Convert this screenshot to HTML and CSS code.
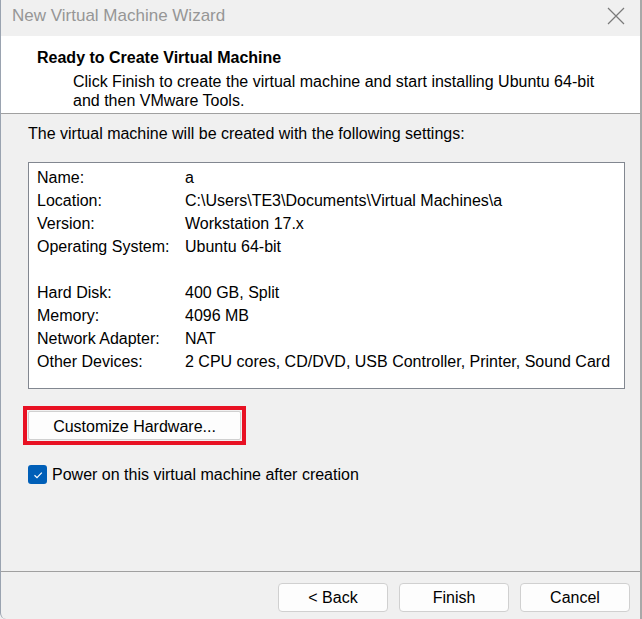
FILE: index.html
```html
<!DOCTYPE html>
<html lang="en">
<head>
  <title>New Virtual Machine Wizard</title>
  <meta charset="utf-8">
  <link rel="stylesheet" href="styles.css">
</head>
<body>
  <div class="window">
    <div class="titlebar">
      <span class="titlebar-text">New Virtual Machine Wizard</span>
      <svg class="close" width="18" height="18" viewBox="0 0 18 18">
        <path d="M1 1 L17 17 M17 1 L1 17" stroke="#7a7a7a" stroke-width="1.2" fill="none"/>
      </svg>
    </div>

    <div class="header">
      <h1 class="header-title">Ready to Create Virtual Machine</h1>
      <p class="header-text">Click Finish to create the virtual machine and start installing Ubuntu 64-bit and then VMware Tools.</p>
    </div>

    <div class="content">
      <p class="intro">The virtual machine will be created with the following settings:</p>
      <div class="summary">
        <div class="summary-row"><span>Name:</span><span>a</span></div>
        <div class="summary-row"><span>Location:</span><span>C:\Users\TE3\Documents\Virtual Machines\a</span></div>
        <div class="summary-row"><span>Version:</span><span>Workstation 17.x</span></div>
        <div class="summary-row"><span>Operating System:</span><span>Ubuntu 64-bit</span></div>
        <div class="summary-row"><span></span><span></span></div>
        <div class="summary-row"><span>Hard Disk:</span><span>400 GB, Split</span></div>
        <div class="summary-row"><span>Memory:</span><span>4096 MB</span></div>
        <div class="summary-row"><span>Network Adapter:</span><span>NAT</span></div>
        <div class="summary-row"><span>Other Devices:</span><span>2 CPU cores, CD/DVD, USB Controller, Printer, Sound Card</span></div>
      </div>

      <div class="highlight">
        <button type="button" class="btn btn-wide">Customize Hardware...</button>
      </div>

      <label class="check-row">
        <span class="checkbox">
          <svg width="12" height="12" viewBox="0 0 12 12">
            <path d="M2.5 6.3 L5 8.7 L9.8 3.6" stroke="#ffffff" stroke-width="1.2" fill="none"/>
          </svg>
        </span>
        Power on this virtual machine after creation
      </label>
    </div>

    <div class="footer">
      <button type="button" class="btn">&lt; Back</button>
      <button type="button" class="btn">Finish</button>
      <button type="button" class="btn">Cancel</button>
    </div>
  </div>
</body>
</html>
```

FILE: styles.css
```css
body {
  background-color: #f0f0f0;
  color: #000000;
  font-family: "Liberation Sans", Arial, sans-serif;
  font-size: 16px;
  margin: 0;
}

.window {
  border-left: 1px solid #9aa3b0;
  border-right: 2px solid #a8a8a8;
  border-bottom-left-radius: 6px;
  box-sizing: border-box;
  display: flex;
  flex-direction: column;
  height: 619px;
  width: 642px;
}

.titlebar {
  align-items: center;
  background-color: #f0f0f0;
  box-sizing: border-box;
  display: flex;
  height: 36px;
  justify-content: space-between;
  padding: 0 15px 5px 11px;
}

.titlebar-text {
  color: #969696;
  font-size: 17px;
}

.header {
  background-color: #ffffff;
  border-bottom: 1px solid #a0a0a0;
  box-sizing: border-box;
  height: 78px;
  padding: 12px 0 0 36px;
}

.header-title {
  font-size: 16px;
  font-weight: bold;
  line-height: 20px;
  margin: 0;
}

.header-text {
  line-height: 19px;
  margin: 4px 0 0 36px;
  width: 545px;
}

.content {
  flex: 1;
  padding: 0 15px 0 27px;
}

.intro {
  line-height: 20px;
  margin: 10px 0 18px;
}

.summary {
  background-color: #ffffff;
  border: 1px solid #828790;
  box-sizing: border-box;
  height: 227px;
  padding: 3px 0 0 8px;
}

.summary-row {
  display: grid;
  grid-template-columns: 148px 1fr;
  height: 23px;
  line-height: 23px;
}

.highlight {
  border: 4px solid #e81123;
  display: inline-block;
  margin: 17px 0 0 -5px;
  padding: 1px;
}

.btn {
  background-color: #fdfdfd;
  border: 1px solid #d0d0d0;
  border-radius: 4px;
  color: #000000;
  font-family: inherit;
  font-size: 16px;
  height: 29px;
  padding: 0;
  width: 110px;
}

.btn-wide {
  border-radius: 2px;
  display: block;
  padding-top: 3px;
  width: 213px;
}

.check-row {
  align-items: center;
  display: flex;
  gap: 5px;
  margin-top: 20px;
}

.checkbox {
  align-items: center;
  background-color: #005fb8;
  border-radius: 3px;
  display: flex;
  height: 19px;
  justify-content: center;
  width: 19px;
}

.footer {
  border-top: 1px solid #a0a0a0;
  box-sizing: border-box;
  display: flex;
  gap: 11px;
  height: 48px;
  justify-content: flex-end;
  padding: 11px 10px 0 0;
}
```
